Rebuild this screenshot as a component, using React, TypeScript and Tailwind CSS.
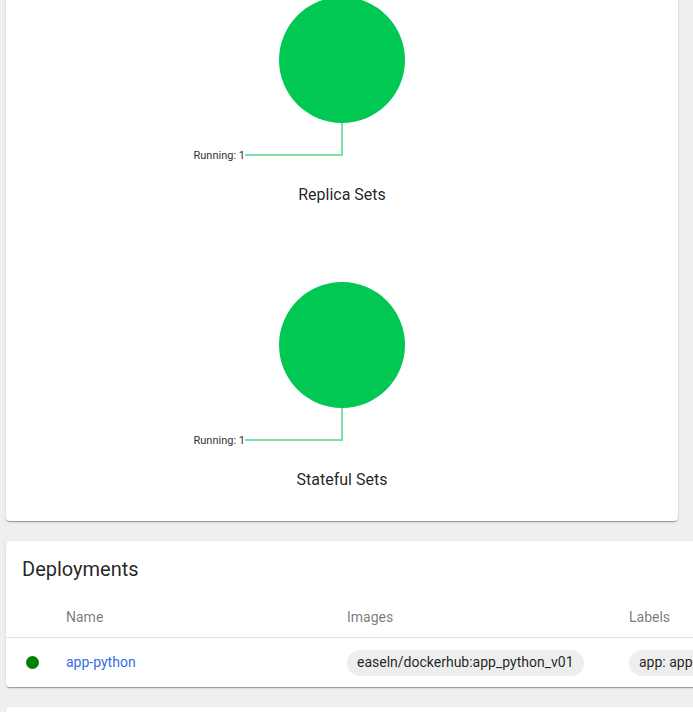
import React from "react";

function Chart({ title, last }: { title: string; last?: boolean }) {
  return (
    <div className={last ? "flex flex-col items-center" : "flex flex-col items-center mb-[68px]"}>
      <svg width="672" height="170" viewBox="0 0 672 170" className="block overflow-visible">
        <circle cx="336" cy="70" r="63" fill="#00c853" />
        <polyline points="336,133 336,165 239,165" fill="none" stroke="#7ee0a4" strokeWidth="2" />
        <text
          x="239"
          y="165"
          dy="4"
          textAnchor="end"
          fontSize="11"
          fill="#333"
          fontFamily="Roboto, sans-serif"
        >
          Running: 1
        </text>
      </svg>
      <div className="mt-[23px] h-6 leading-6 text-[16px] text-[rgba(0,0,0,0.87)]">{title}</div>
    </div>
  );
}

const shadow =
  "shadow-[0_2px_1px_-1px_rgba(0,0,0,0.2),0_1px_1px_0_rgba(0,0,0,0.14),0_1px_3px_0_rgba(0,0,0,0.12)]";

export default function App() {
  return (
    <div
      className="w-[693px] h-[712px] overflow-hidden bg-[#eeeff0]"
      style={{ fontFamily: "Roboto, 'Liberation Sans', sans-serif" }}
    >
      <div className={`ml-[6px] w-[672px] -mt-[10px] bg-white rounded pb-[29px] ${shadow}`}>
        <Chart title="Replica Sets" />
        <Chart title="Stateful Sets" last />
      </div>

      <div className={`ml-[6px] mt-[20px] w-[760px] bg-white rounded ${shadow}`}>
        <div className="h-[56px] flex items-center px-4 text-[20px] text-[rgba(0,0,0,0.87)]">Deployments</div>
        <div className="h-[41px] flex items-center border-b border-[#e0e0e0] text-[14px] text-[rgba(0,0,0,0.54)]">
          <div className="w-[60px] shrink-0" />
          <div className="w-[281px] shrink-0">Name</div>
          <div className="w-[282px] shrink-0">Images</div>
          <div>Labels</div>
        </div>
        <div className="h-[49px] flex items-center text-[14px]">
          <div className="w-[60px] shrink-0 flex justify-center pr-[8px]">
            <span className="block w-[13px] h-[13px] rounded-full bg-[#008000]" />
          </div>
          <div className="w-[281px] shrink-0 text-[#326de6]">app-python</div>
          <div className="w-[282px] shrink-0">
            <span className="inline-flex items-center h-[26px] px-[10px] rounded-full bg-[#eeeeee] text-[rgba(0,0,0,0.87)]">
              easeln/dockerhub:app_python_v01
            </span>
          </div>
          <div>
            <span className="inline-flex items-center h-[26px] px-[10px] rounded-full bg-[#eeeeee] text-[rgba(0,0,0,0.87)] whitespace-nowrap">
              app: app-python
            </span>
          </div>
        </div>
      </div>

      <div className={`ml-[6px] mt-[20px] w-[760px] h-[100px] bg-white rounded ${shadow}`} />
    </div>
  );
}
